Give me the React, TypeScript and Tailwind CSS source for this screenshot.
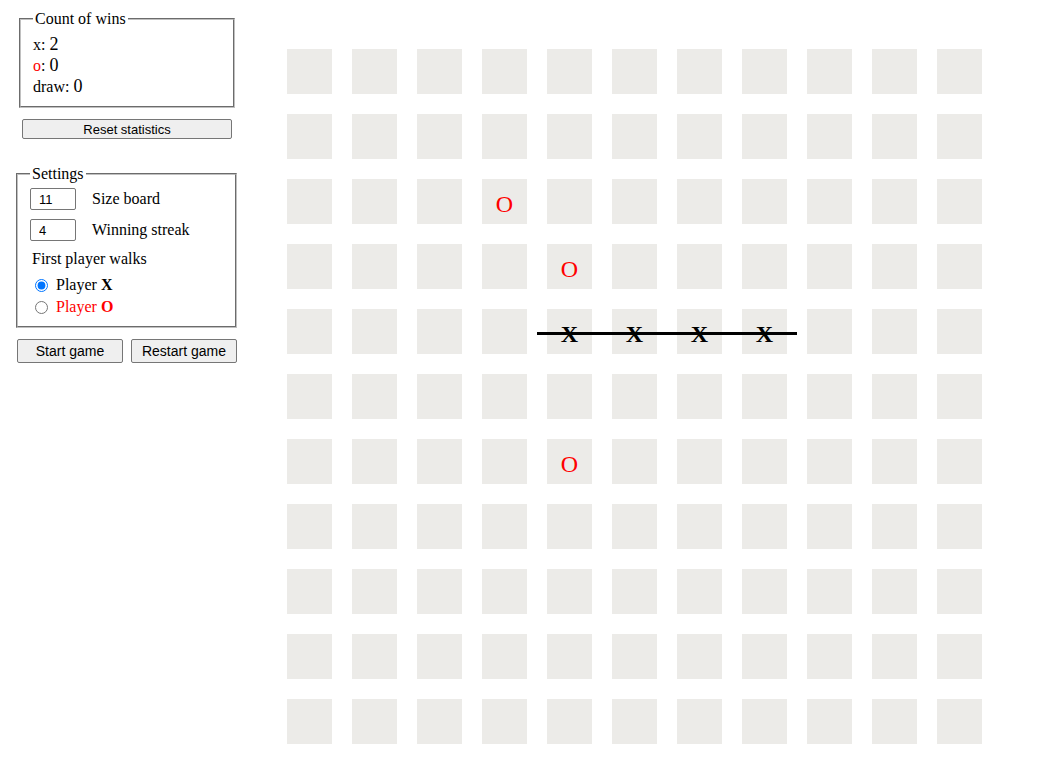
import React from "react";

const SIZE = 11;

const marks: Record<string, "x" | "o"> = {
  "2-3": "o",
  "3-4": "o",
  "4-4": "x",
  "4-5": "x",
  "4-6": "x",
  "4-7": "x",
  "6-4": "o",
};

function Cell({ mark }: { mark?: "x" | "o" }) {
  return (
    <div className="w-[45px] h-[45px] bg-[#ecebe8] flex items-center justify-center text-[24px] leading-none pt-[4px]">
      {mark === "x" && <span className="font-bold text-black">X</span>}
      {mark === "o" && <span className="text-[#ff0000]">O</span>}
    </div>
  );
}

function Board() {
  const cells = [];
  for (let r = 0; r < SIZE; r++) {
    for (let c = 0; c < SIZE; c++) {
      cells.push(<Cell key={r + "-" + c} mark={marks[r + "-" + c]} />);
    }
  }
  return (
    <div className="relative mt-[49px] ml-[50px]">
      <div className="grid grid-cols-[repeat(11,45px)] gap-[20px]">{cells}</div>
      {/* winning line */}
      <div className="absolute left-[250px] top-[283px] w-[260px] h-[3px] bg-black" />
    </div>
  );
}

const inputCls =
  "w-[46px] h-[22px] border border-[#767676] rounded-[2px] px-[8px] text-[13px] font-['Liberation_Sans',Arial,sans-serif]";
const btnCls =
  "bg-[#efefef] border border-[#767676] rounded-[2px] font-['Liberation_Sans',Arial,sans-serif] text-black";

function Sidebar() {
  return (
    <div className="w-[237px] shrink-0 flex flex-col">
      <fieldset className="ml-[19px] mt-[10px] w-[216px] border-2 [border-style:groove] border-[#c0c0c0] px-3 pt-[6px] pb-[9px] text-[16px]">
        <legend className="px-[2px] leading-[18px]">Count of wins</legend>
        <div className="leading-[21px]">
          x: <span className="text-[18px]">2</span>
        </div>
        <div className="leading-[21px]">
          <span className="text-[#ff0000]">o</span>: <span className="text-[18px]">0</span>
        </div>
        <div className="leading-[21px]">
          draw: <span className="text-[18px]">0</span>
        </div>
      </fieldset>
      <button className={btnCls + " ml-[22px] mt-[11px] w-[210px] h-[20px] text-[13px]"}>
        Reset statistics
      </button>

      <fieldset className="ml-[16px] mt-[26px] w-[221px] border-2 [border-style:groove] border-[#c0c0c0] px-3 pt-[5px] pb-[10px] text-[16px]">
        <legend className="px-[2px] leading-[18px] h-[18px]">Settings</legend>
        <div className="flex items-center h-[22px]">
          <input defaultValue="11" className={inputCls} />
          <span className="ml-[16px] leading-[18px]">Size board</span>
        </div>
        <div className="flex items-center h-[22px] mt-[9px]">
          <input defaultValue="4" className={inputCls} />
          <span className="ml-[16px] leading-[18px]">Winning streak</span>
        </div>
        <div className="mt-[9px] h-[18px] leading-[18px] pl-[2px]">First player walks</div>
        <label className="flex items-center h-[18px] mt-[8px] leading-[18px]">
          <input type="radio" name="first" defaultChecked className="w-[13px] h-[13px] ml-[5px] mr-[8px] accent-[#0075ff]" />
          <span>
            Player <b>X</b>
          </span>
        </label>
        <label className="flex items-center h-[18px] mt-[4px] leading-[18px] text-[#ff0000]">
          <input type="radio" name="first" className="w-[13px] h-[13px] ml-[5px] mr-[8px]" />
          <span>
            Player <b>O</b>
          </span>
        </label>
      </fieldset>

      <div className="flex gap-[8px] ml-[17px] mt-[11px]">
        <button className={btnCls + " w-[106px] h-[24px] text-[14px]"}>Start game</button>
        <button className={btnCls + " w-[106px] h-[24px] text-[14px]"}>Restart game</button>
      </div>
    </div>
  );
}

export default function App() {
  return (
    <div className="flex min-h-screen bg-white text-black font-['Liberation_Serif','Times_New_Roman',serif]">
      <Sidebar />
      <Board />
    </div>
  );
}
